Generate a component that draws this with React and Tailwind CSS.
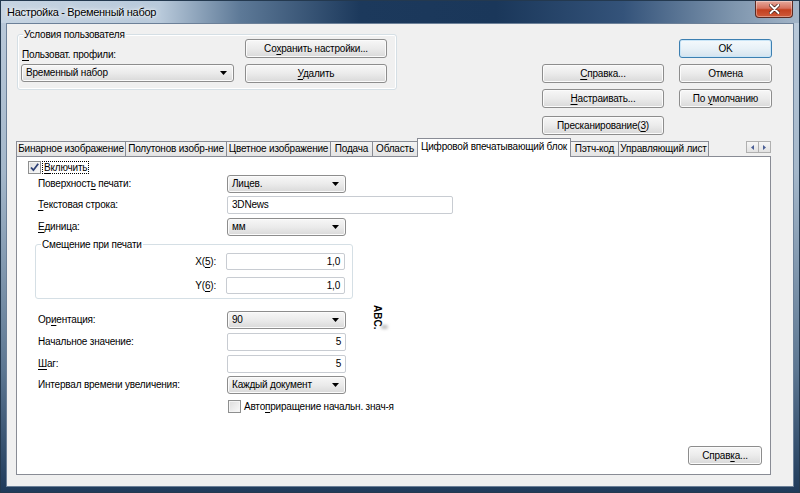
import React from "react";

const U = ({ children }) => <span className="underline underline-offset-[2px]">{children}</span>;

function Button({ children, className = "", primary = false }) {
  const skin = primary
    ? "border-[#3c7fb1] bg-linear-to-b from-[#f4f9fc] via-[#e8f1f7] to-[#d5e3ee] shadow-[inset_0_0_0_1px_#c9e5f7]"
    : "border-[#8d8d8d] bg-linear-to-b from-[#f7f7f7] via-[#ebebeb] to-[#d9d9d9] shadow-[inset_0_0_0_1px_#fbfbfb]";
  return (
    <div className={`flex items-center justify-center rounded-[3px] border leading-none text-black ${skin} ${className}`}>
      <span className="whitespace-nowrap">{children}</span>
    </div>
  );
}

function Combo({ children, className = "" }) {
  return (
    <div className={`flex items-center h-[18px] rounded-[3px] border border-[#8d8d8d] bg-linear-to-b from-[#f7f7f7] via-[#ebebeb] to-[#d9d9d9] shadow-[inset_0_0_0_1px_#fbfbfb] pl-[4px] pr-[6px] ${className}`}>
      <span className="flex-1 leading-none whitespace-nowrap">{children}</span>
      <svg width="7" height="4" viewBox="0 0 7 4">
        <path d="M0 0h7L3.5 4z" fill="#000" />
      </svg>
    </div>
  );
}

function Field({ children, className = "", right = false }) {
  return (
    <div className={`flex items-center bg-white border border-[#c8ccd2] rounded-[2px] px-[4px] leading-none ${right ? "justify-end" : ""} ${className}`}>
      <span>{children}</span>
    </div>
  );
}

function CheckBox({ checked = false }) {
  return (
    <div className="w-[13px] h-[13px] shrink-0 border border-[#8e8f8f] bg-linear-to-br from-[#dcdcdc] to-[#fafafa] shadow-[inset_0_0_0_1px_#f4f4f4] flex items-center justify-center">
      {checked && (
        <svg width="11" height="11" viewBox="0 0 11 11">
          <path d="M2 5.5 L4.4 8.2 L9.2 1.8" fill="none" stroke="#2c3f74" strokeWidth="1.8" />
        </svg>
      )}
    </div>
  );
}

const tabs = [
  ["Бинарное изображение", "w-[110px]"],
  ["Полутонов изобр-ние", "w-[102px]"],
  ["Цветное изображение", "w-[105px]"],
  ["Подача", "w-[43px]"],
  ["Область", "w-[46px]"],
  ["Цифровой впечатывающий блок", "w-[154px]", true],
  ["Пэтч-код", "w-[49px]"],
  ["Управляющий лист", "w-[91px]"],
];

function Row({ label, children, className = "" }) {
  return (
    <div className={`flex items-center h-[18px] ml-[21px] ${className}`}>
      <div className="w-[189px] leading-none whitespace-nowrap">{label}</div>
      {children}
    </div>
  );
}

export default function App() {
  return (
    <div className="w-[800px] h-[493px] flex flex-col border border-[#24394f] bg-[linear-gradient(180deg,#bccbdb_0%,#a4b7ca_35%,#5d7792_75%,#203b5b_100%)] font-['Liberation_Sans',Arial,sans-serif] text-[10px] tracking-[-0.2px] text-black overflow-hidden">
      {/* title bar */}
      <div className="h-[22px] flex items-start bg-[linear-gradient(90deg,#c6d4e2_0%,#b8c9da_20%,#5d7997_30%,#1c395c_45%,#1a375a_62%,#34537a_78%,#7f96ae_92%,#a3b5c8_100%)]">
        <div className="pl-[6px] pt-[4px] text-[11px] tracking-[-0.3px] leading-[14px] text-black whitespace-nowrap [text-shadow:0_0_6px_#ffffff,0_0_3px_#ffffff]">
          Настройка - Временный набор
        </div>
        <div className="ml-auto mr-[6px] w-[38px] h-[17px] rounded-b-[4px] border border-t-0 border-[#5b2a22] bg-[linear-gradient(180deg,#e6a99c_0%,#d6715e_45%,#c3401f_55%,#cf5a3a_100%)] flex items-center justify-center shadow-[inset_0_0_0_1px_rgba(255,255,255,0.35)]">
          <svg width="11" height="10" viewBox="0 0 11 10">
            <path d="M1.5 1 L9.5 9 M9.5 1 L1.5 9" stroke="#3b1a14" strokeWidth="3.4" strokeLinecap="round" />
            <path d="M1.5 1 L9.5 9 M9.5 1 L1.5 9" stroke="#ffffff" strokeWidth="2" strokeLinecap="round" />
          </svg>
        </div>
      </div>

      {/* client area */}
      <div className="flex-1 mx-[5px] mb-[5px] border border-[#6c8098] bg-[#f0f0f0] flex flex-col">
        {/* top section */}
        <div className="h-[114px] flex items-start">
          <div className="relative mt-[10px] ml-[10px] w-[380px] h-[56px] rounded-[3px] border border-[#d5dfe5] shadow-[inset_0_0_0_1px_#ffffff] flex">
            <span className="absolute left-[5px] -top-[7px] px-[1px] bg-[#f0f0f0] leading-[13px] whitespace-nowrap">Условия пользователя</span>
            <div className="pl-[3px] pt-[13px] flex flex-col">
              <div className="ml-[1px] leading-[13px] whitespace-nowrap">
                <U>П</U>ользоват. профили:
              </div>
              <Combo className="mt-[3px] w-[213px]">Временный набор</Combo>
            </div>
            <div className="ml-[11px] pt-[4px] flex flex-col gap-[6px]">
              <Button className="w-[142px] h-[19px]">
                Со<U>х</U>ранить настройки...
              </Button>
              <Button className="w-[142px] h-[19px]">
                <U>У</U>далить
              </Button>
            </div>
          </div>

          <div className="ml-[145px] pt-[40px] flex flex-col">
            <Button className="w-[122px] h-[19px]">
              <U>С</U>правка...
            </Button>
            <Button className="w-[122px] h-[19px] mt-[6px]">
              <U>Н</U>астраивать...
            </Button>
            <Button className="w-[122px] h-[19px] mt-[8px]">
              Пресканирование(<U>3</U>)
            </Button>
          </div>

          <div className="ml-[15px] pt-[15px] flex flex-col gap-[6px]">
            <Button primary className="w-[93px] h-[19px]">
              OK
            </Button>
            <Button className="w-[93px] h-[19px]">Отмена</Button>
            <Button className="w-[93px] h-[19px]">
              По <U>у</U>молчанию
            </Button>
          </div>
        </div>

        {/* tab strip */}
        <div className="ml-[9px] w-[755px] h-[18px] flex items-end">
          {tabs.map(([name, w, active], i) => (
            <div
              key={name}
              className={`${w} ${i > 0 ? "-ml-[1px]" : ""} flex items-center justify-center leading-none whitespace-nowrap border border-b-0 border-[#898c95] ${
                active
                  ? "relative z-10 h-[19px] -mb-[1px] bg-white pb-[2px]"
                  : "h-[15px] bg-linear-to-b from-[#f3f3f3] to-[#e3e3e3]"
              }`}
            >
              {name}
            </div>
          ))}
          <div className="ml-auto mb-[3px] flex">
            <div className="w-[13px] h-[12px] border border-[#b0b0b0] bg-linear-to-b from-[#f6f6f6] to-[#e2e2e2] flex items-center justify-center">
              <svg width="3" height="5" viewBox="0 0 3 5">
                <path d="M3 0v5L0 2.5z" fill="#4a5e96" />
              </svg>
            </div>
            <div className="w-[13px] h-[12px] -ml-[1px] border border-[#b0b0b0] bg-linear-to-b from-[#f6f6f6] to-[#e2e2e2] flex items-center justify-center">
              <svg width="3" height="5" viewBox="0 0 3 5">
                <path d="M0 0v5L3 2.5z" fill="#4a5e96" />
              </svg>
            </div>
          </div>
        </div>

        {/* tab panel */}
        <div className="relative ml-[9px] w-[755px] h-[319px] border border-[#898c95] bg-white flex flex-col">
          <div className="mt-[4px] ml-[11px] h-[13px] flex items-center gap-[1px]">
            <CheckBox checked />
            <span className="border border-dotted border-black px-[1px] leading-[11px] whitespace-nowrap">
              <U>В</U>ключить
            </span>
          </div>

          <Row className="mt-[1px]" label={<>Поверхност<U>ь</U> печати:</>}>
            <Combo className="w-[119px]">Лицев.</Combo>
          </Row>
          <Row className="mt-[3px]" label={<><U>Т</U>екстовая строка:</>}>
            <Field className="w-[226px] h-[18px]">3DNews</Field>
          </Row>
          <Row className="mt-[4px]" label={<><U>Е</U>диница:</>}>
            <Combo className="w-[119px]">мм</Combo>
          </Row>

          <div className="relative mt-[8px] ml-[18px] w-[318px] h-[55px] rounded-[3px] border border-[#d5dfe5] flex flex-col pt-[8px]">
            <span className="absolute left-[5px] -top-[7px] px-[1px] bg-white leading-[13px] whitespace-nowrap">Смещение при печати</span>
            <div className="flex items-center h-[17px]">
              <div className="w-[180px] text-right leading-none">
                X(<U>5</U>):
              </div>
              <Field right className="ml-[10px] w-[119px] h-[17px]">1,0</Field>
            </div>
            <div className="flex items-center h-[17px] mt-[7px]">
              <div className="w-[180px] text-right leading-none">
                Y(<U>6</U>):
              </div>
              <Field right className="ml-[10px] w-[119px] h-[17px]">1,0</Field>
            </div>
          </div>

          <Row className="mt-[12px]" label={<>Ор<U>и</U>ентация:</>}>
            <Combo className="w-[119px]">90</Combo>
          </Row>
          <Row className="mt-[4px]" label="Начальное значение:">
            <Field right className="w-[119px] h-[18px]">5</Field>
          </Row>
          <Row className="mt-[4px]" label={<><U>Ш</U>аг:</>}>
            <Field right className="w-[119px] h-[18px]">5</Field>
          </Row>
          <Row className="mt-[3px]" label="Интервал времени увеличения:">
            <Combo className="w-[119px]">Каждый документ</Combo>
          </Row>

          <div className="mt-[6px] ml-[211px] h-[13px] flex items-center gap-[3px]">
            <CheckBox />
            <span className="leading-none whitespace-nowrap">
              Авто<U>п</U>риращение начальн. знач-я
            </span>
          </div>

          <div className="flex-1" />
          <div className="flex justify-end pr-[8px] pb-[9px]">
            <Button className="w-[74px] h-[19px]">
              Справ<U>к</U>а...
            </Button>
          </div>

          {/* orientation preview */}
          <div className="absolute left-[355px] top-[148px] flex">
            <span className="[writing-mode:vertical-rl] font-bold text-[10px] leading-[10px] tracking-[0px]">ABC.</span>
            <span className="mt-[20px] -ml-[1px] w-[7px] h-[4px] rounded-full bg-[#bdbdbd] blur-[1.5px]" />
          </div>
        </div>
      </div>
    </div>
  );
}
